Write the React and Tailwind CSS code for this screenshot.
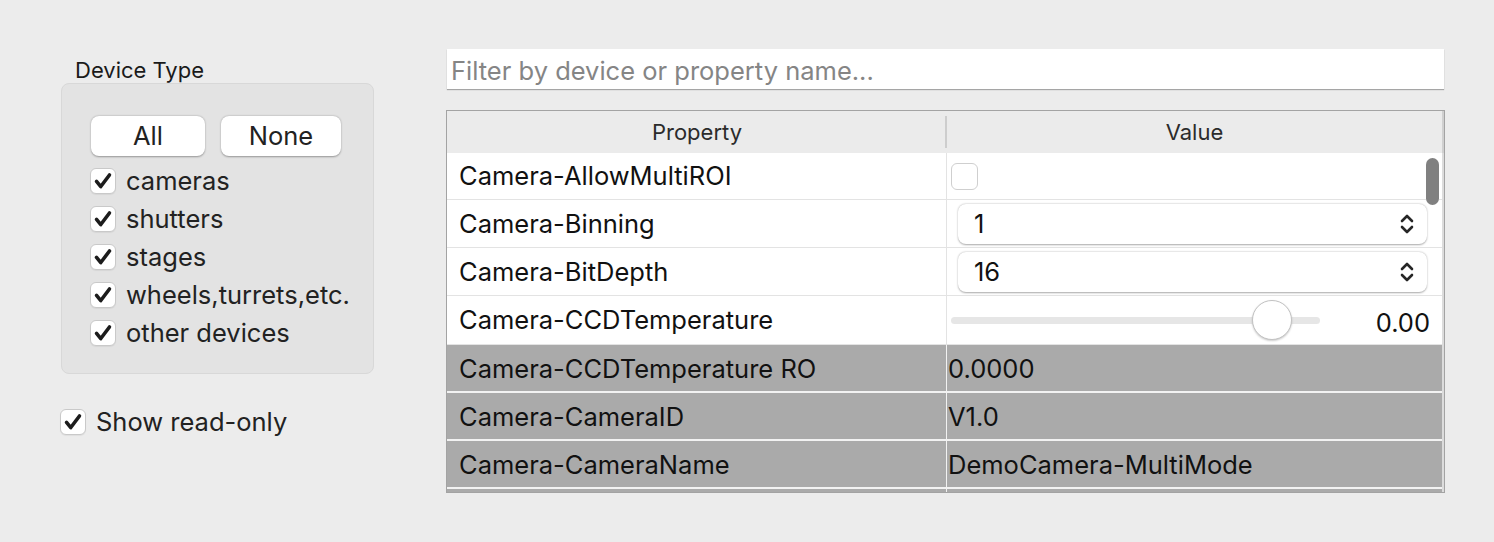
import React from "react";

const FONT = { fontFamily: "Inter, 'Noto Sans', 'Liberation Sans', sans-serif" };

function CheckMark() {
  return (
    <svg viewBox="0 0 26 26" className="w-[26px] h-[26px]">
      <path d="M6 13.5 L10.6 19 L20 6.5" fill="none" stroke="#1c1c1c" strokeWidth="3.9" strokeLinecap="round" strokeLinejoin="round" />
    </svg>
  );
}

function Box({ checked = true }) {
  return (
    <div className="w-[26px] h-[26px] rounded-[6px] bg-white border border-[#c9c9c9] shadow-[0_1px_1px_rgba(0,0,0,0.06)] flex items-center justify-center shrink-0">
      {checked && <CheckMark />}
    </div>
  );
}

function CheckRow({ label }) {
  return (
    <div className="h-[38px] flex items-center gap-[10px]">
      <Box />
      <span className="text-[25.5px] leading-none text-[#222]">{label}</span>
    </div>
  );
}

function UpDown() {
  return (
    <svg viewBox="0 0 16 24" className="w-[16px] h-[24px]">
      <path d="M3 9 L8 4 L13 9" fill="none" stroke="#262626" strokeWidth="2.6" strokeLinecap="round" strokeLinejoin="round" />
      <path d="M3 15 L8 20 L13 15" fill="none" stroke="#262626" strokeWidth="2.6" strokeLinecap="round" strokeLinejoin="round" />
    </svg>
  );
}

function Combo({ value }) {
  return (
    <div className="ml-[11px] w-[469px] h-[40px] rounded-[8px] bg-white shadow-[0_0.5px_2px_rgba(0,0,0,0.35)] flex items-center pl-[16px] pr-[12px]">
      <span className="flex-1 text-[25.5px] leading-none text-[#111]">{value}</span>
      <UpDown />
    </div>
  );
}

function WhiteRow({ name, children, h = "h-[48px]" }) {
  return (
    <div className={`flex ${h} bg-white border-b border-[#e3e3e3]`}>
      <div className="w-[500px] shrink-0 border-r border-[#e3e3e3] flex items-center pl-[12px] text-[25.5px] leading-none text-[#111]">
        {name}
      </div>
      <div className="flex-1 flex items-center relative">{children}</div>
    </div>
  );
}

function GrayRow({ name, value }) {
  return (
    <div className="flex h-[48px] bg-[#aaaaaa] border-b-2 border-[#f2f2f2]">
      <div className="w-[500px] shrink-0 border-r border-[#f2f2f2] flex items-center pl-[12px] pt-[1px] text-[25.5px] leading-none text-[#111]">
        {name}
      </div>
      <div className="flex-1 flex items-center pl-[1px] pt-[2px] text-[25.5px] leading-none text-[#111]">{value}</div>
    </div>
  );
}

export default function App() {
  return (
    <div className="w-[1494px] h-[542px] bg-[#ececec] flex overflow-hidden" style={FONT}>
      {/* Left column */}
      <div className="w-[446px] shrink-0 pl-[61px] pt-[57px]">
        <div className="ml-[14px] text-[22px] leading-[26px] text-[#1a1a1a]">Device Type</div>
        <div className="w-[313px] h-[291px] rounded-[8px] bg-[#e3e3e3] border border-[#d8d8d8] pt-[32px] pl-[29px]">
          <div className="flex gap-[16px]">
            <div className="w-[114px] h-[40px] rounded-[8px] bg-white shadow-[0_0.5px_2px_rgba(0,0,0,0.35)] flex items-center justify-center text-[25.5px] leading-none text-[#222]">
              All
            </div>
            <div className="w-[120px] h-[40px] rounded-[8px] bg-white shadow-[0_0.5px_2px_rgba(0,0,0,0.35)] flex items-center justify-center text-[25.5px] leading-none text-[#222]">
              None
            </div>
          </div>
          <div className="mt-[6px] -ml-[1px]">
            <CheckRow label="cameras" />
            <CheckRow label="shutters" />
            <CheckRow label="stages" />
            <CheckRow label="wheels,turrets,etc." />
            <CheckRow label="other devices" />
          </div>
        </div>
        <div className="mt-[29px] -ml-[1px]">
          <CheckRow label="Show read-only" />
        </div>
      </div>

      {/* Right column */}
      <div className="w-[999px] shrink-0 pt-[49px]">
        <div className="ml-[1px] w-[997px] h-[40px] bg-white shadow-[0_1px_1px_rgba(0,0,0,0.3)] flex items-center pl-[4px] pt-[3px] text-[25.5px] leading-none text-[#858585]">
          Filter by device or property name...
        </div>
        <div className="mt-[21px] w-[999px] h-[383px] border border-[#a3a3a3] overflow-hidden relative bg-[#dcdcdc]">
          <div className="w-[995px]">
            {/* Header */}
            <div className="flex h-[42px] bg-[#ebebeb] items-center text-[22px] leading-none text-[#2b2b2b]">
              <div className="w-[500px] shrink-0 h-full flex items-center justify-center relative">
                Property
                <div className="absolute right-0 top-[5px] w-[2px] h-[32px] bg-[#cdcdcd]" />
              </div>
              <div className="flex-1 h-full flex items-center justify-center">Value</div>
            </div>
            {/* Body */}
            <div className="relative">
              <WhiteRow name="Camera-AllowMultiROI" h="h-[47px]">
                <div className="ml-[4px] w-[27px] h-[27px] rounded-[6px] bg-white border border-[#cfcfcf]" />
              </WhiteRow>
              <WhiteRow name="Camera-Binning">
                <Combo value="1" />
              </WhiteRow>
              <WhiteRow name="Camera-BitDepth">
                <Combo value="16" />
              </WhiteRow>
              <WhiteRow name="Camera-CCDTemperature" h="h-[49px]">
                <div className="ml-[4px] w-[369px] h-[7px] rounded-full bg-[#e6e6e6] relative">
                  <div className="absolute left-[301px] top-[-17px] w-[40px] h-[40px] rounded-full bg-white border border-[#c2c2c2] shadow-[0_1px_2px_rgba(0,0,0,0.2)]" />
                </div>
                <span className="ml-auto mr-[12px] mt-[6px] text-[25.5px] leading-none text-[#111]">0.00</span>
              </WhiteRow>
              <GrayRow name="Camera-CCDTemperature RO" value="0.0000" />
              <GrayRow name="Camera-CameraID" value="V1.0" />
              <GrayRow name="Camera-CameraName" value="DemoCamera-MultiMode" />
              <GrayRow name="" value="" />
              <div className="absolute right-[3px] top-[5px] w-[13px] h-[47px] rounded-full bg-[#808080]" />
            </div>
          </div>
          <div className="absolute right-0 top-0 w-[2px] h-[42px] bg-[#d0d0d0]" />
        </div>
      </div>
    </div>
  );
}
